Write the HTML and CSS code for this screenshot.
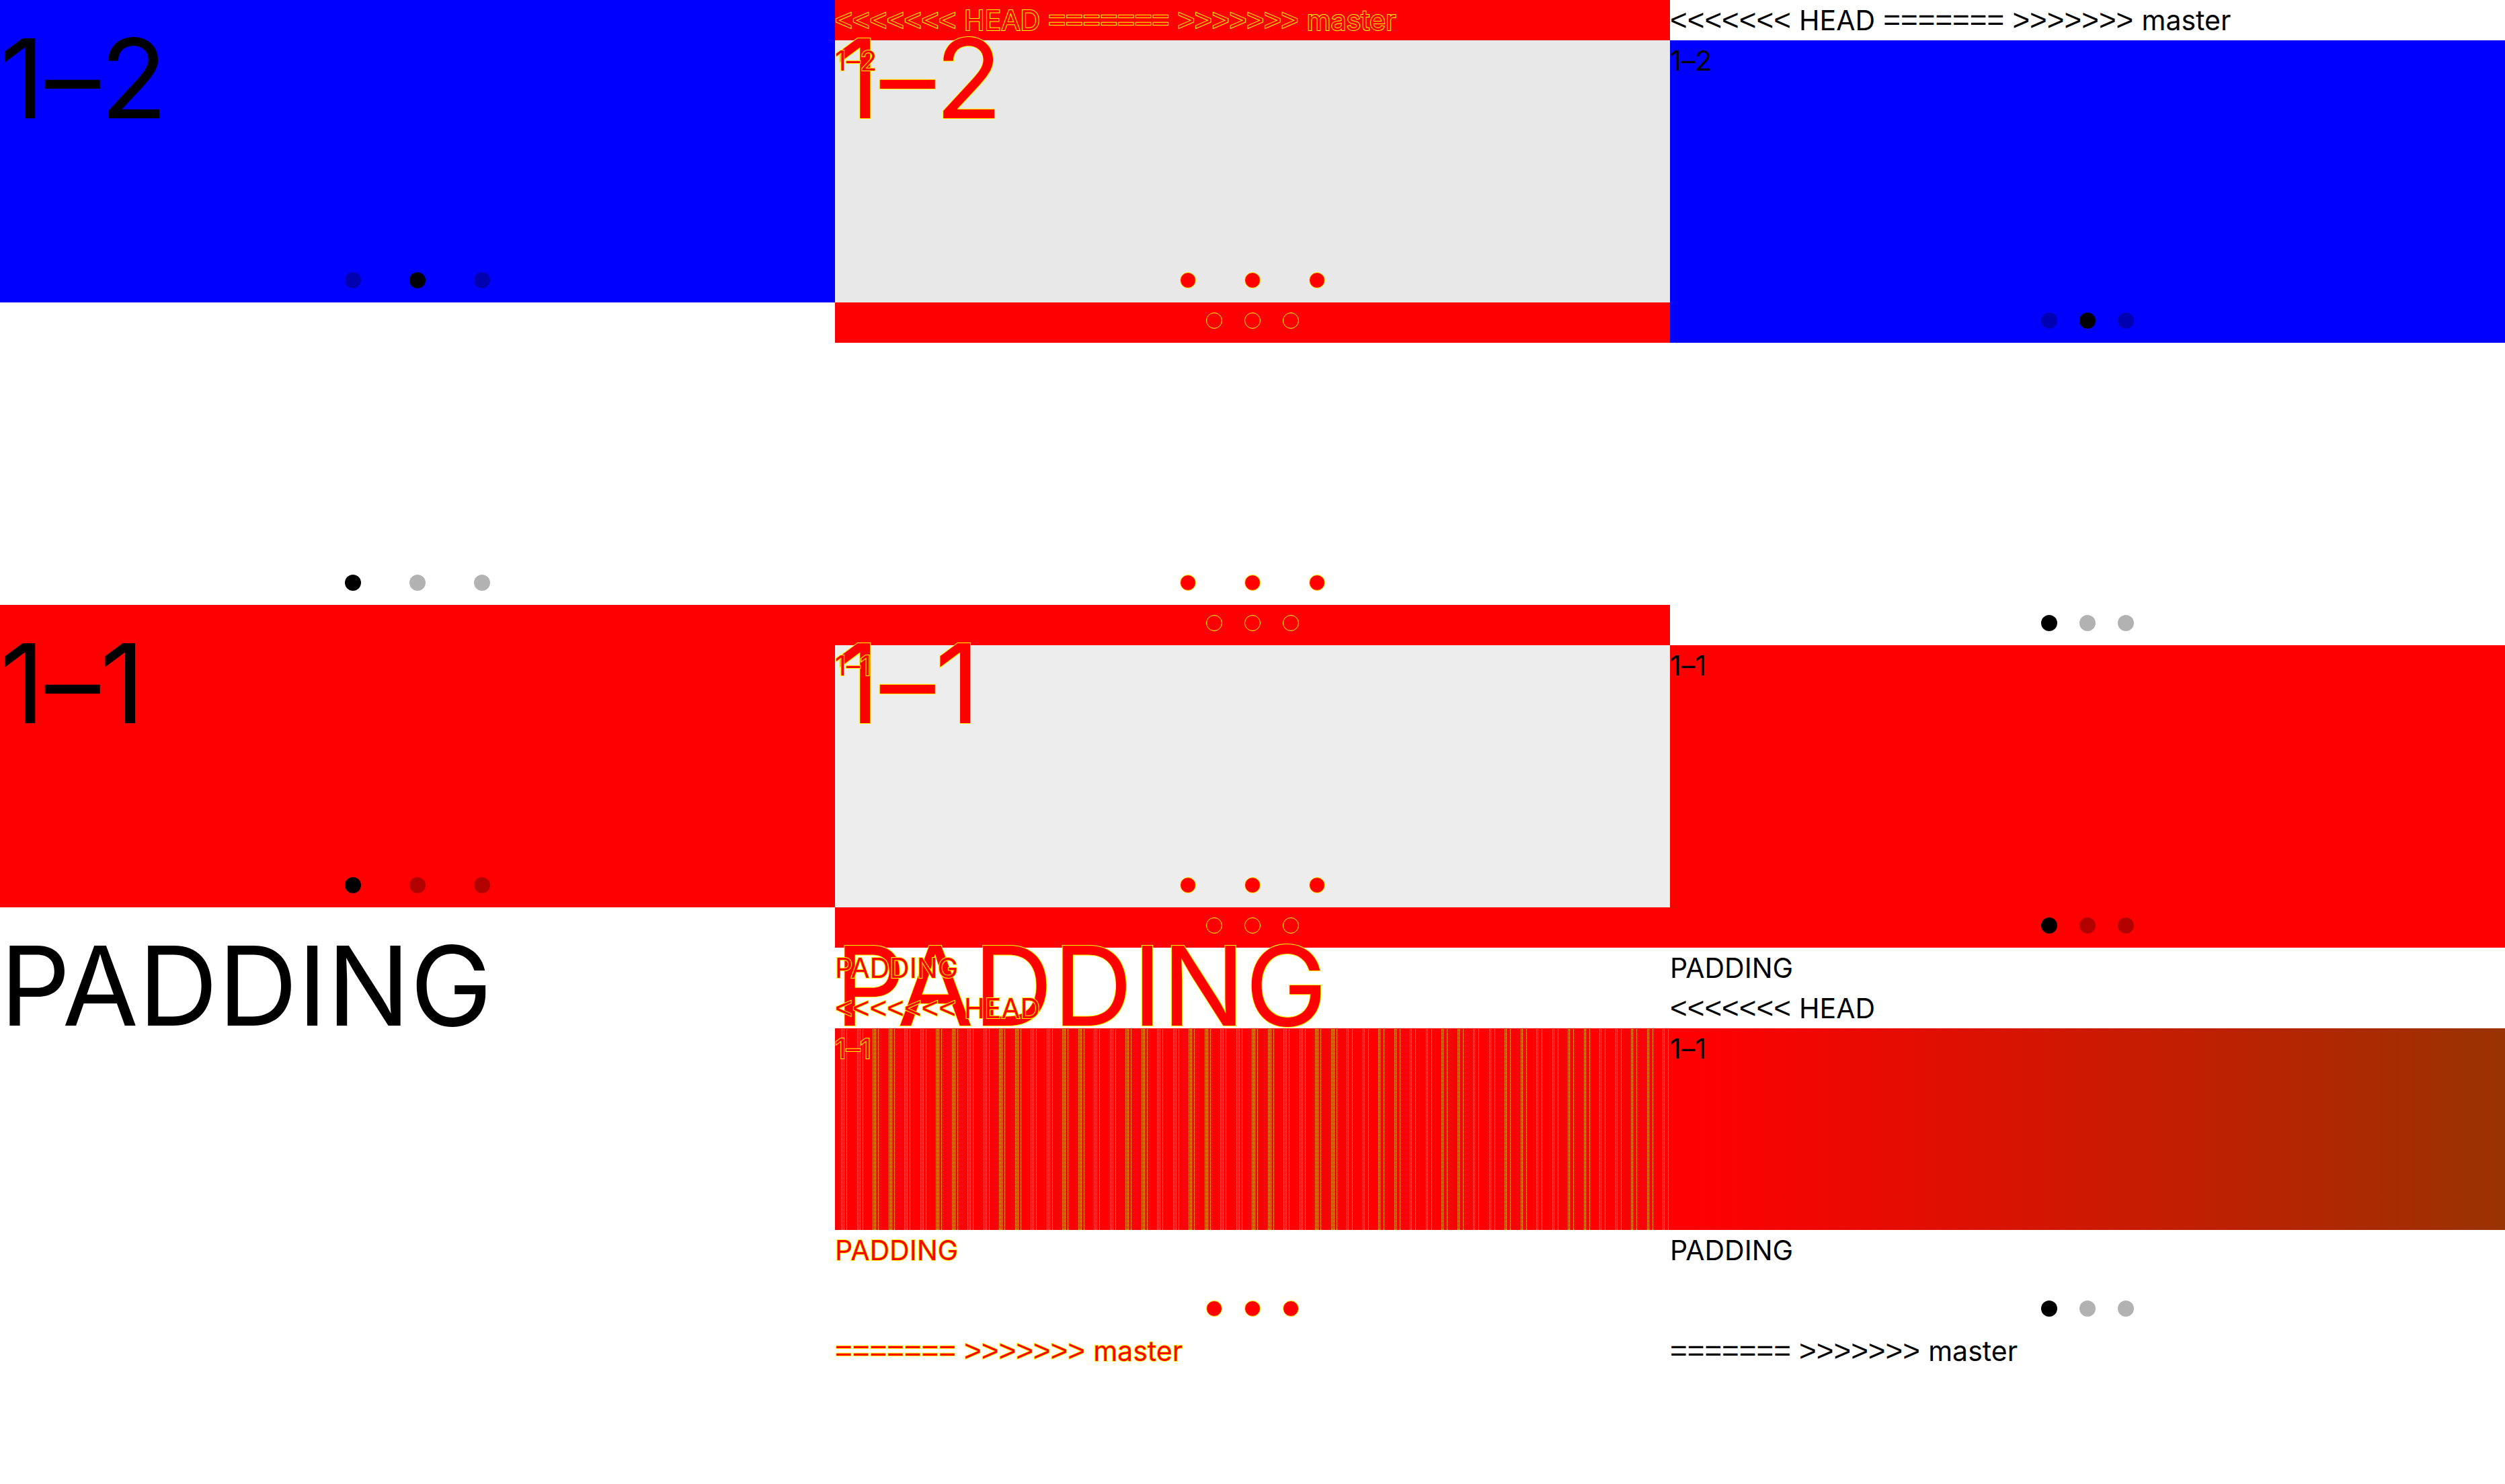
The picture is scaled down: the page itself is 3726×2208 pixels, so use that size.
FILE: index.html
```
<!DOCTYPE html>
<html lang="en">
<head>
<meta charset="utf-8">
<title>Swiper comparison</title>
<link rel="stylesheet" href="styles.css">
</head>
<body>
<main class="comparison">
  <section class="page page-large">
    <div class="slide blue"><p class="label">1–2</p><div class="dots"><button type="button"></button><button type="button" class="active"></button><button type="button"></button></div></div>
    <div class="slide"><div class="dots"><button type="button" class="active"></button><button type="button"></button><button type="button"></button></div></div>
    <div class="slide red"><p class="label">1–1</p><div class="dots"><button type="button" class="active"></button><button type="button"></button><button type="button"></button></div></div>
    <p class="label">PADDING</p>
  </section>

  <section class="diff">
    <div class="bands">
      <div class="band thin changed"></div>
      <div class="band mid overlap-blue"></div>
      <div class="band thin changed"></div>
      <div class="band mid"></div>
      <div class="band thin changed"></div>
      <div class="band mid overlap-red"></div>
      <div class="band thin changed"></div>
    </div>
    <div class="page page-large">
      <div class="slide"><p class="label">1–2</p><div class="dots"><i></i><i></i><i></i></div></div>
      <div class="slide"><div class="dots"><i></i><i></i><i></i></div></div>
      <div class="slide"><p class="label">1–1</p><div class="dots"><i></i><i></i><i></i></div></div>
      <p class="label">PADDING</p>
    </div>
    <div class="page page-small">
      <p class="label"><span class="sign">&lt;&lt;&lt;&lt;&lt;&lt;&lt; </span>HEAD<span class="sign"> ======= &gt;&gt;&gt;&gt;&gt;&gt;&gt; </span>master</p>
      <div class="slide"><p class="label">1–2</p><div class="dots"><i></i><i></i><i></i></div></div>
      <div class="slide"><div class="dots"><i></i><i></i><i></i></div></div>
      <div class="slide"><p class="label">1–1</p><div class="dots"><i></i><i></i><i></i></div></div>
      <p class="label">PADDING</p>
      <p class="label"><span class="sign">&lt;&lt;&lt;&lt;&lt;&lt;&lt; </span>HEAD</p>
      <div class="slide">
        <div class="box stripes"><p class="label">1–1</p></div>
        <p class="label">PADDING</p>
        <div class="dots"><i></i><i></i><i></i></div>
      </div>
      <p class="label"><span class="sign">======= &gt;&gt;&gt;&gt;&gt;&gt;&gt; </span>master</p>
    </div>
  </section>

  <section class="page page-small">
    <p class="label"><span class="sign">&lt;&lt;&lt;&lt;&lt;&lt;&lt; </span>HEAD<span class="sign"> ======= &gt;&gt;&gt;&gt;&gt;&gt;&gt; </span>master</p>
    <div class="slide blue"><p class="label">1–2</p><div class="dots"><button type="button"></button><button type="button" class="active"></button><button type="button"></button></div></div>
    <div class="slide"><div class="dots"><button type="button" class="active"></button><button type="button"></button><button type="button"></button></div></div>
    <div class="slide red"><p class="label">1–1</p><div class="dots"><button type="button" class="active"></button><button type="button"></button><button type="button"></button></div></div>
    <p class="label">PADDING</p>
    <p class="label"><span class="sign">&lt;&lt;&lt;&lt;&lt;&lt;&lt; </span>HEAD</p>
    <div class="slide">
      <div class="box fade"><p class="label">1–1</p></div>
      <p class="label">PADDING</p>
      <div class="dots"><button type="button" class="active"></button><button type="button"></button><button type="button"></button></div>
    </div>
    <p class="label"><span class="sign">======= &gt;&gt;&gt;&gt;&gt;&gt;&gt; </span>master</p>
  </section>
</main>
</body>
</html>
```
FILE: styles.css
```
body {
  margin: 0;
  background: #fff;
  color: #000;
  font-family: Inter, "Liberation Sans", sans-serif;
  font-weight: 400;
  font-feature-settings: "calt" 0;
}

.comparison {
  display: grid;
  grid-template-columns: repeat(3, 1fr);
  min-height: 100vh;
}

.label {
  margin: 0;
  white-space: nowrap;
}

.page-large .label {
  font-size: 164px;
  line-height: 234px;
}

.page-small .label {
  font-size: 41px;
  line-height: 60px;
}

.page-small .sign {
  font-family: "Liberation Sans", sans-serif;
  font-size: 44px;
  line-height: 1;
}

.slide {
  display: flex;
  flex-direction: column;
  box-sizing: border-box;
  height: 450px;
  padding-bottom: 21px;
}

.blue { background: #00f; }
.red { background: #f00; }

.box { height: 300px; }
.fade { background: linear-gradient(to right, #f00 3%, #930); }

/* pagination */
.dots {
  display: flex;
  justify-content: center;
  margin-top: auto;
}

.page-large .dots { gap: 72px; }
.page-small .dots { gap: 33px; }

.dots button,
.dots i {
  box-sizing: border-box;
  width: 24px;
  height: 24px;
  padding: 0;
  border: 0;
  border-radius: 50%;
  background: rgba(0, 0, 0, .3);
}

.dots .active { background: #000; }

/* difference view: both pages stacked in one grid cell */
.diff {
  display: grid;
  grid-template-columns: 1fr;
}

.diff > * { grid-area: 1 / 1; }

.thin { height: 60px; }
.mid { height: 390px; }
.changed { background: #f00; }
.overlap-blue { background: #e8e8e8; }
.overlap-red { background: #ededed; }

.diff .label {
  color: #f00;
  -webkit-text-stroke: 2px #ff0;
  paint-order: stroke fill;
}

.diff .dots i {
  border: 1px solid #ff0;
  background: #f00;
}

.stripes {
  background:
    repeating-linear-gradient(to bottom, #f00 0 1px, transparent 1px 2px),
    repeating-linear-gradient(to right, transparent 0 13px, #ff0 13px 14px, transparent 14px 37px, #ff0 37px 38px, transparent 38px 47px) 0 0 / 60% 100% no-repeat,
    repeating-linear-gradient(to right, transparent 0 9px, #ff0 9px 10px, transparent 10px 11px, #ff0 11px 12px, transparent 12px 17px, #ff0 17px 18px, transparent 18px 33px, #ff0 33px 34px, transparent 34px 35px, #ff0 35px 36px, transparent 36px 41px, #ff0 41px 42px, transparent 42px 47px),
    #f00;
}
```
